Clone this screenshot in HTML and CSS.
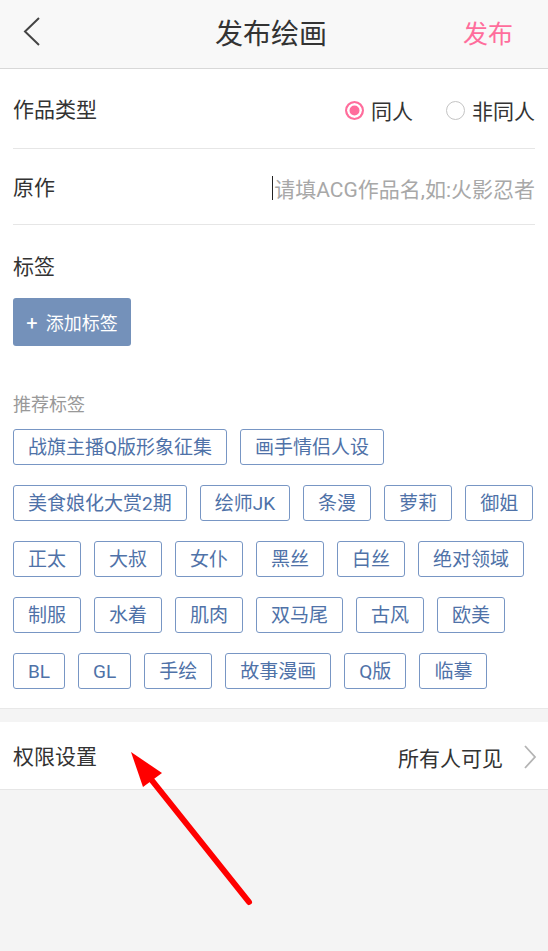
FILE: index.html
```html
<!DOCTYPE html>
<html lang="zh-CN">
<head>
    <meta charset="UTF-8">
    <meta name="viewport" content="width=device-width, initial-scale=1.0">
    <title>发布绘画</title>
    <link rel="stylesheet" href="styles.css">
</head>
<body>
    <div class="page">
        <div class="header">
            <svg class="back" width="20" height="32" viewBox="0 0 20 32">
                <polyline points="16,2 2,15.5 16,29" fill="none" stroke="#444" stroke-width="2"/>
            </svg>
            <h1>发布绘画</h1>
            <span class="publish">发布</span>
        </div>

        <div class="form">
            <div class="row">
                <span class="label">作品类型</span>
                <div class="radios">
                    <span class="radio on"></span><span class="radio-text">同人</span>
                    <span class="radio"></span><span class="radio-text">非同人</span>
                </div>
            </div>
            <div class="row">
                <span class="label">原作</span>
                <span class="input"><i class="caret"></i>请填ACG作品名,如:火影忍者</span>
            </div>
            <div class="tags-block">
                <div class="label">标签</div>
                <button class="add-tag"><span class="plus">+</span>添加标签</button>
                <div class="hint">推荐标签</div>
                <div class="tags">
                    <span class="tag">战旗主播Q版形象征集</span>
                    <span class="tag">画手情侣人设</span>
                </div>
                <div class="tags">
                    <span class="tag">美食娘化大赏2期</span>
                    <span class="tag">绘师JK</span>
                    <span class="tag">条漫</span>
                    <span class="tag">萝莉</span>
                    <span class="tag">御姐</span>
                    <span class="tag">正太</span>
                    <span class="tag">大叔</span>
                    <span class="tag">女仆</span>
                    <span class="tag">黑丝</span>
                    <span class="tag">白丝</span>
                    <span class="tag">绝对领域</span>
                    <span class="tag">制服</span>
                    <span class="tag">水着</span>
                    <span class="tag">肌肉</span>
                    <span class="tag">双马尾</span>
                    <span class="tag">古风</span>
                    <span class="tag">欧美</span>
                    <span class="tag">BL</span>
                    <span class="tag">GL</span>
                    <span class="tag">手绘</span>
                    <span class="tag">故事漫画</span>
                    <span class="tag">Q版</span>
                    <span class="tag">临摹</span>
                </div>
            </div>
        </div>

        <div class="setting">
            <span class="label">权限设置</span>
            <span class="value">所有人可见</span>
            <svg class="more" width="14" height="24" viewBox="0 0 14 24">
                <polyline points="2,1 12,12 2,23" fill="none" stroke="#b4b4b4" stroke-width="1.8"/>
            </svg>
        </div>

        <!-- annotation arrow drawn over the screenshot -->
        <svg class="arrow" width="548" height="951" viewBox="0 0 548 951">
            <line x1="150" y1="778" x2="249" y2="902" stroke="#ff0000" stroke-width="6" stroke-linecap="round"/>
            <polygon points="131,752 143,787 162,773" fill="#ff0000"/>
        </svg>
    </div>
</body>
</html>
```

FILE: styles.css
```css
body {
    margin: 0;
    padding: 0;
    background-color: #f4f4f4;
    font-family: Roboto, "Noto Sans CJK SC", sans-serif;
    color: #333;
}
.page {
    position: relative;
    width: 548px;
    min-height: 951px;
}
.header {
    height: 68px;
    background-color: #f8f8f8;
    border-bottom: 1px solid #d8d8d8;
    display: flex;
    align-items: center;
    justify-content: space-between;
    padding: 0 35px 0 23px;
}
.header .back {
    display: block;
    margin-top: -4px;
}
.header h1 {
    margin: 0 0 5px 36px;
    font-size: 28px;
    font-weight: normal;
    color: #333;
}
.publish {
    font-size: 25px;
    color: #ff6d9c;
    margin-bottom: 5px;
}
.form {
    background-color: #fff;
    padding: 0 13px 19px;
    border-bottom: 1px solid #e8e8e8;
}
.row {
    box-sizing: border-box;
    height: 80px;
    padding-top: 3px;
    border-bottom: 1px solid #e6e6e6;
    display: flex;
    align-items: center;
    justify-content: space-between;
}
.row + .row {
    height: 76px;
}
.label {
    font-size: 21px;
    line-height: 30px;
    color: #333;
}
.radios {
    display: flex;
    align-items: center;
}
.radio {
    width: 19px;
    height: 19px;
    box-sizing: border-box;
    border-radius: 50%;
    border: 1.5px solid #c4c4c4;
    margin-right: 7px;
}
.radio.on {
    border: 2px solid #ff6d9c;
    background-color: #ff6d9c;
    box-shadow: inset 0 0 0 2.5px #fff;
}
.radio-text {
    font-size: 21px;
    color: #333;
    margin-right: 33px;
}
.radio-text:last-child {
    margin-right: 0;
}
.input {
    font-size: 21px;
    color: #a8a8a8;
    display: flex;
    align-items: center;
}
.caret {
    display: inline-block;
    width: 1.5px;
    height: 24px;
    background-color: #222;
    margin-right: 1px;
}
.tags-block {
    padding-top: 27px;
}
.add-tag {
    display: block;
    margin-top: 16px;
    width: 118px;
    height: 48px;
    border: none;
    border-radius: 3px;
    background-color: #7491ba;
    color: #fff;
    font-family: inherit;
    font-size: 18px;
    padding: 0;
}
.add-tag .plus {
    font-size: 20px;
    margin-right: 8px;
}
.hint {
    margin-top: 47px;
    font-size: 18px;
    line-height: 24px;
    color: #999;
}
.tags {
    margin-top: 12px;
    display: flex;
    flex-wrap: wrap;
    gap: 20px 13px;
}
.tags + .tags {
    margin-top: 20px;
}
.tag {
    height: 36px;
    line-height: 35px;
    box-sizing: border-box;
    padding: 0 14px;
    border: 1px solid #7896c4;
    border-radius: 3px;
    font-size: 19px;
    color: #4f72a8;
}
.setting {
    margin-top: 13px;
    height: 67px;
    background-color: #fff;
    border-bottom: 1px solid #e6e6e6;
    display: flex;
    align-items: center;
    padding: 2px 11px 0 13px;
    box-sizing: border-box;
    height: 68px;
}
.setting .label {
    flex: 1;
}
.setting .value {
    font-size: 21px;
    color: #333;
    margin-right: 20px;
}
.more {
    display: block;
}
.arrow {
    position: absolute;
    top: 0;
    left: 0;
    pointer-events: none;
}
```
